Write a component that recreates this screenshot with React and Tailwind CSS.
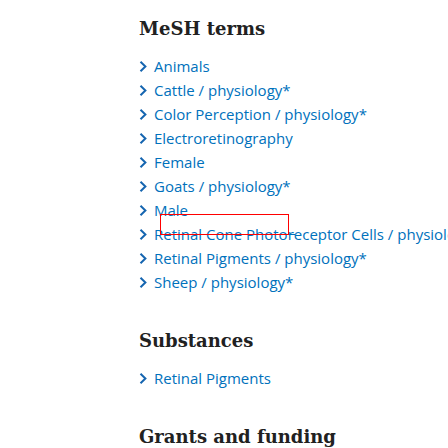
import React from 'react';

const meshTerms = [
  'Animals',
  'Cattle / physiology*',
  'Color Perception / physiology*',
  'Electroretinography',
  'Female',
  'Goats / physiology*',
  'Male',
  'Retinal Cone Photoreceptor Cells / physiology*',
  'Retinal Pigments / physiology*',
  'Sheep / physiology*',
];

const substances = ['Retinal Pigments'];

function Chevron() {
  return (
    <svg width="8" height="11" viewBox="0 0 8 11" className="shrink-0 mr-[7px] mt-[1px]">
      <path d="M1.5 0.8 L6.4 5.5 L1.5 10.2" fill="none" stroke="#1565b0" strokeWidth="2" />
    </svg>
  );
}

function TermList({ items }) {
  return (
    <ul>
      {items.map((item) => (
        <li key={item} className="flex items-center h-[24px] whitespace-nowrap">
          <Chevron />
          <span className="text-[15px] leading-[24px] text-[#0071bc]">{item}</span>
        </li>
      ))}
    </ul>
  );
}

function Heading({ children }) {
  return (
    <h2 className="text-[18px] leading-[24px] font-bold text-[#212121] font-['DejaVu_Serif',serif] mb-[13px]">
      {children}
    </h2>
  );
}

export default function App() {
  return (
    <div className="relative w-[448px] h-[448px] overflow-hidden bg-white pl-[139px] pt-[17px] font-['Open_Sans',sans-serif]">
      <section>
        <Heading>MeSH terms</Heading>
        <TermList items={meshTerms} />
      </section>

      <section className="mt-[35px]">
        <Heading>Substances</Heading>
        <TermList items={substances} />
      </section>

      <section className="mt-[35px]">
        <Heading>Grants and funding</Heading>
      </section>

      {/* highlight box over the list */}
      <div className="absolute left-[160px] top-[234px] w-[135px] h-[1px] bg-[#0071bc]" />
      <div className="absolute left-[160px] top-[214px] w-[129px] h-[21px] border border-[#ff0000]" />
    </div>
  );
}
